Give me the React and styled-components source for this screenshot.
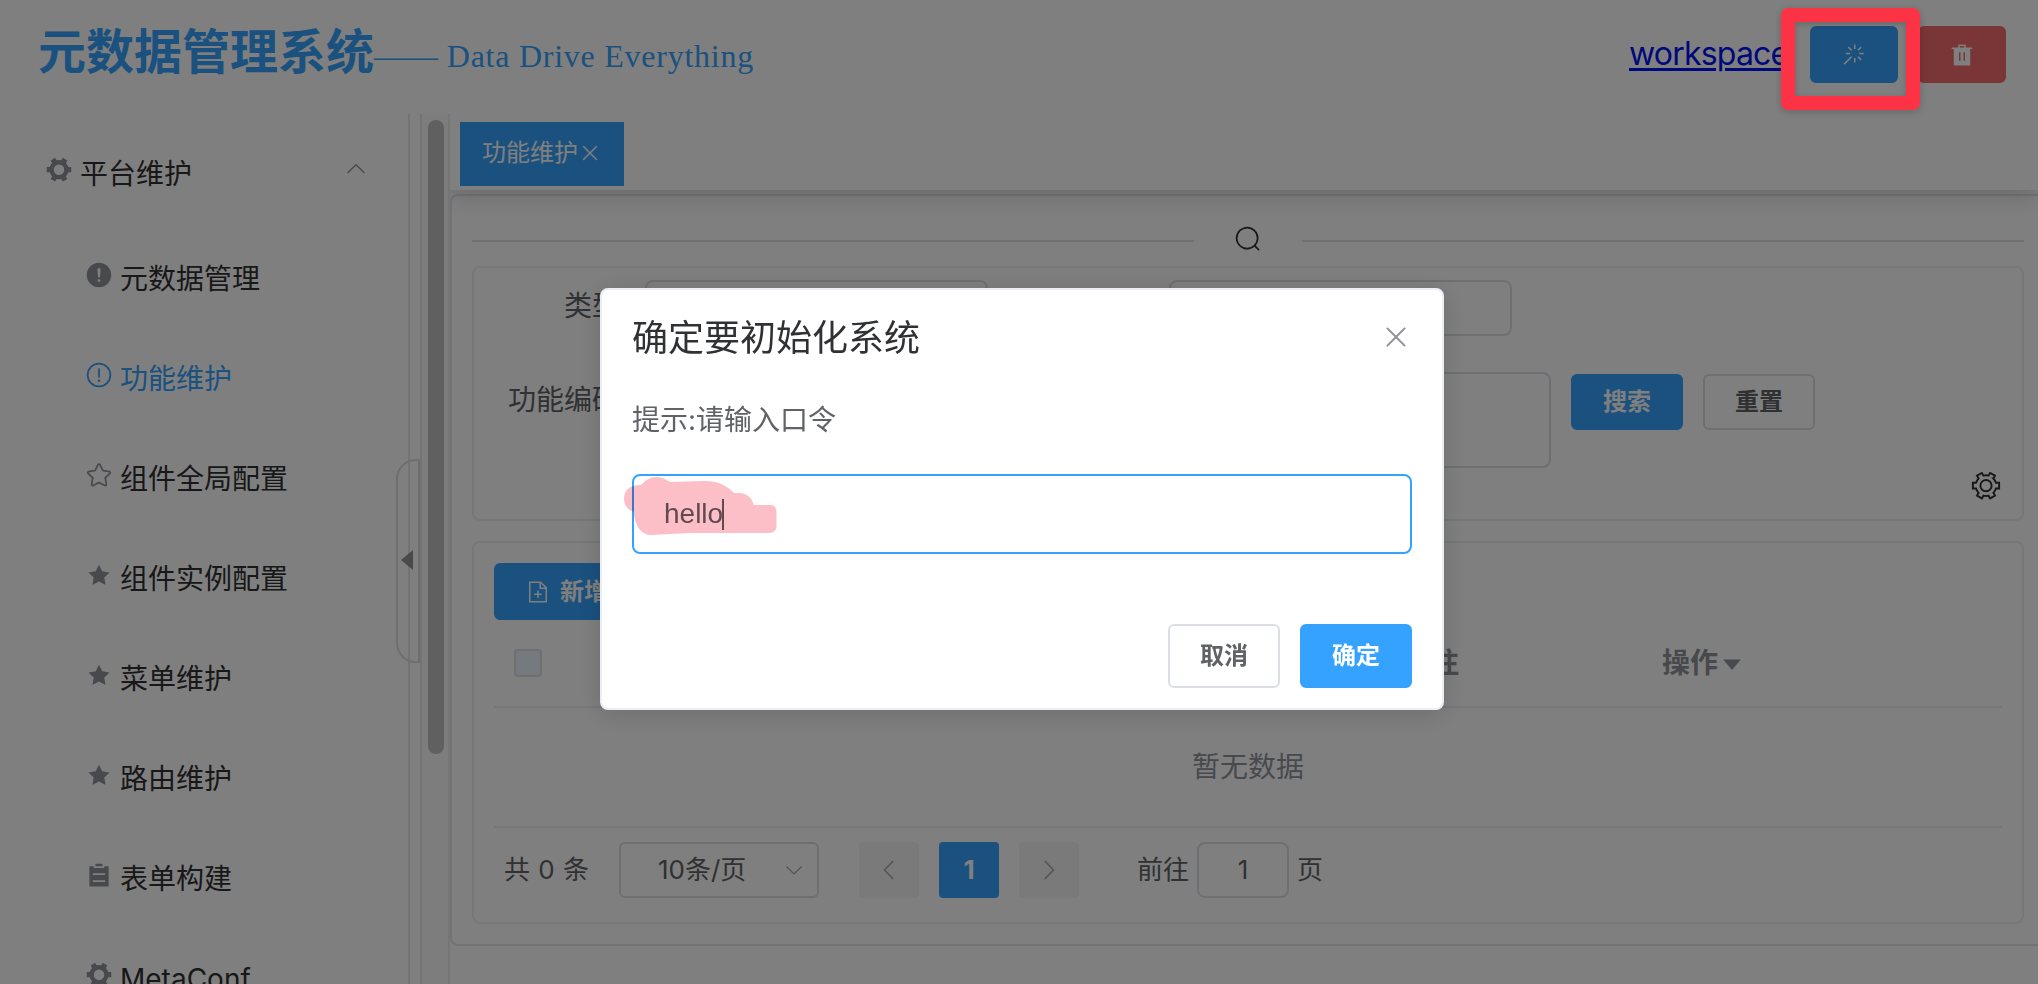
import React from "react";
import styled, { createGlobalStyle, css } from "styled-components";

const BLUE = "#36a2ff";

const GlobalStyle = createGlobalStyle`
  *, *::before, *::after { box-sizing: border-box; }
  html, body { margin: 0; padding: 0; overflow: hidden; background: #fff; }
  body {
    font-family: Inter, "Noto Sans CJK SC", "Liberation Sans", sans-serif;
    font-size: 28px;
    color: #303133;
  }
`;

const paths = {
  magic: "M512 64h64v192h-64V64zm0 576h64v192h-64V640zM160 480v-64h192v64H160zm576 0v-64h192v64H736zM249.856 199.04l45.248-45.184L430.848 289.6 385.6 334.848 249.856 199.104zM657.152 606.4l45.248-45.248 135.744 135.744-45.248 45.248L657.152 606.4zM114.048 923.2 68.8 877.952l316.8-316.8 45.248 45.248-316.8 316.8zM702.4 334.848 657.152 289.6l135.744-135.744 45.248 45.248L702.4 334.848z",
  trash: "M352 192V95.936a32 32 0 0 1 32-32h256a32 32 0 0 1 32 32V192h256a32 32 0 1 1 0 64H96a32 32 0 0 1 0-64h256zm64 0h192v-64H416v64zM192 960a32 32 0 0 1-32-32V256h704v672a32 32 0 0 1-32 32H192zm224-192a32 32 0 0 0 32-32V416a32 32 0 0 0-64 0v320a32 32 0 0 0 32 32zm192 0a32 32 0 0 0 32-32V416a32 32 0 0 0-64 0v320a32 32 0 0 0 32 32z",
  close: "M764.288 214.592 512 466.88 259.712 214.592a31.936 31.936 0 0 0-45.12 45.12L466.752 512 214.528 764.224a31.936 31.936 0 1 0 45.12 45.184L512 557.184l252.288 252.288a31.936 31.936 0 0 0 45.12-45.12L557.12 512.064l252.288-252.352a31.936 31.936 0 1 0-45.12-45.184z",
  warningFilled: "M512 64a448 448 0 1 1 0 896 448 448 0 0 1 0-896zm0 192a58.432 58.432 0 0 0-58.24 63.744l23.36 256.384a35.072 35.072 0 0 0 69.76 0l23.296-256.384A58.432 58.432 0 0 0 512 256zm0 512a51.2 51.2 0 1 0 0-102.4 51.2 51.2 0 0 0 0 102.4z",
  warning: "M512 64a448 448 0 1 1 0 896 448 448 0 0 1 0-896zm0 832a384 384 0 0 0 0-768 384 384 0 0 0 0 768zm48-176a48 48 0 1 1-96 0 48 48 0 0 1 96 0zm-48-464a32 32 0 0 1 32 32v288a32 32 0 0 1-64 0V288a32 32 0 0 1 32-32z",
  star: "m512 747.84 228.16 119.936a6.4 6.4 0 0 0 9.28-6.72l-43.52-254.08 184.512-179.904a6.4 6.4 0 0 0-3.52-10.88l-255.104-37.12L517.76 147.904a6.4 6.4 0 0 0-11.52 0L392.192 379.072l-255.104 37.12a6.4 6.4 0 0 0-3.52 10.88L318.08 606.976l-43.584 254.08a6.4 6.4 0 0 0 9.28 6.72L512 747.84zM313.6 924.48a70.4 70.4 0 0 1-102.144-74.24l37.888-220.928L88.96 472.96A70.4 70.4 0 0 1 128 352.896l221.76-32.256 99.2-200.96a70.4 70.4 0 0 1 126.208 0l99.2 200.96 221.824 32.256a70.4 70.4 0 0 1 39.04 120.064L774.72 629.376l37.888 220.928a70.4 70.4 0 0 1-102.144 74.24L512 820.096l-198.4 104.32z",
  starFilled: "M283.84 867.84 512 747.776l228.16 119.936a6.4 6.4 0 0 0 9.28-6.72l-43.52-254.08 184.512-179.904a6.4 6.4 0 0 0-3.52-10.88l-255.104-37.12L517.76 147.904a6.4 6.4 0 0 0-11.52 0L392.192 379.072l-255.104 37.12a6.4 6.4 0 0 0-3.52 10.88L318.08 606.976l-43.584 254.08a6.4 6.4 0 0 0 9.28 6.72z",
  search: "m795.904 750.72 124.992 124.928a32 32 0 0 1-45.248 45.248L750.656 795.904a416 416 0 1 1 45.248-45.248zM480 832a352 352 0 1 0 0-704 352 352 0 0 0 0 704z",
  tools: "M764.416 254.72a351.68 351.68 0 0 1 86.336 149.184H960v192.064H850.752a351.68 351.68 0 0 1-86.336 149.312l54.72 94.72-166.272 96-54.592-94.72a352.64 352.64 0 0 1-172.48 0L371.136 936l-166.272-96 54.72-94.72a351.68 351.68 0 0 1-86.336-149.312H64v-192h109.248a351.68 351.68 0 0 1 86.336-149.312L204.8 160l166.208-96h.192l54.656 94.592a352.64 352.64 0 0 1 172.48 0L652.8 64h.128L819.2 160l-54.72 94.72zM704 499.968a192 192 0 1 0-384 0 192 192 0 0 0 384 0z",
  docAdd: "M832 384H576V128H192v768h640V384zm-26.496-64L640 154.496V320h165.504zM160 64h480l256 256v608a32 32 0 0 1-32 32H160a32 32 0 0 1-32-32V96a32 32 0 0 1 32-32zm320 512V448h64v128h128v64H544v128h-64V640H352v-64h128z",
  list: "M704 192h160v736H160V192h160v64h384v-64zM288 512h448v-64H288v64zm0 256h448v-64H288v64zm96-576V96h256v96H384z",
  arrow: "M831.872 340.864 512 652.672 192.128 340.864a30.592 30.592 0 0 0-42.752 0 29.12 29.12 0 0 0 0 41.6L489.664 714.24a32 32 0 0 0 44.672 0l340.288-331.712a29.12 29.12 0 0 0 0-41.728 30.592 30.592 0 0 0-42.752 0z",
  caret: "m192 384 320 384 320-384z",
};

const Svg = styled.svg`
  display: block;
  flex: none;
  width: ${(p) => p.$size}px;
  height: ${(p) => p.$size}px;
  fill: ${(p) => p.$color || "currentColor"};
  transform: rotate(${(p) => p.$turn || 0}deg);
`;

const OutlinePath = styled.path`
  fill: none;
  stroke: currentColor;
  stroke-width: 66;
`;

const Icon = ({ name, size = 28, color, turn, outline }) => (
  <Svg viewBox="0 0 1024 1024" $size={size} $color={color} $turn={turn} aria-hidden="true">
    {outline ? <OutlinePath d={paths[name]} /> : <path d={paths[name]} />}
  </Svg>
);

const Page = styled.div`
  display: flex;
  flex-direction: column;
  width: 2038px;
  height: 984px;
  overflow: hidden;
  background: #fff;
`;

const Header = styled.header`
  display: flex;
  flex: none;
  height: 114px;
  padding-left: 38px;
  padding-right: 32px;
`;

const Brand = styled.h1`
  margin: 0;
  font-size: 48px;
  line-height: 103px;
  font-weight: 700;
  color: ${BLUE};
  white-space: nowrap;
`;

const Slogan = styled.span`
  flex: 1;
  padding-top: 8px;
  font-family: "Liberation Serif", serif;
  font-size: 32px;
  line-height: 96px;
  color: ${BLUE};
  white-space: pre;
`;

const SloganText = styled.span`
  letter-spacing: ${(p) => p.$spacing}px;
`;

const HeaderTools = styled.div`
  display: flex;
  align-items: flex-start;
  gap: 20px;
  padding-top: 26px;
`;

const WorkspaceLink = styled.a`
  width: 161px;
  color: #0012f6;
  font-size: 32px;
  letter-spacing: -0.8px;
  line-height: 56px;
  text-decoration: underline;
  text-decoration-thickness: 3px;
  text-underline-offset: 3px;
`;

const Button = styled.button`
  display: flex;
  align-items: center;
  justify-content: center;
  gap: 10px;
  flex: none;
  width: ${(p) => p.$width}px;
  height: ${(p) => p.$height || 56}px;
  padding: 0;
  border: 2px solid ${(p) => (p.$tone ? p.$tone : "#dcdfe6")};
  border-radius: 6px;
  background: ${(p) => p.$tone || "#fff"};
  color: ${(p) => (p.$tone ? "#fff" : "#606266")};
  font-family: inherit;
  font-size: 24px;
  font-weight: 700;
  line-height: 1;
`;

const Body = styled.div`
  display: flex;
  flex: 1;
  min-height: 0;
`;

const Aside = styled.aside`
  position: relative;
  flex: none;
  width: 422px;
  border-right: 2px solid #e6e6e6;
`;

const Menu = styled.nav`
  width: 410px;
  height: 100%;
  padding-top: 10px;
  overflow: hidden;
  border-right: 2px solid #e6e6e6;
`;

const MenuTitle = styled.div`
  display: flex;
  align-items: center;
  height: 105px;
  padding: 0 40px 6px 45px;
  gap: 7px;
  color: #303133;
`;

const MenuItem = styled.div`
  display: flex;
  align-items: center;
  height: 100px;
  padding-left: 85px;
  gap: 7px;
  color: ${(p) => (p.$active ? BLUE : "#303133")};
`;

const MenuIcon = styled.span`
  padding-bottom: ${(p) => p.$lift || 8}px;
  color: ${(p) => (p.$active ? BLUE : "#909399")};
`;

const MenuLabel = styled.span`
  flex: 1;
  line-height: 40px;
`;

const FoldHandle = styled.div`
  position: absolute;
  top: 345px;
  right: 0;
  display: flex;
  align-items: center;
  justify-content: center;
  width: 24px;
  height: 204px;
  border: 2px solid #dcdcdc;
  border-radius: 20px 0 0 20px;
`;

const FoldArrow = styled.span`
  width: 0;
  height: 0;
  margin-right: 3px;
  margin-bottom: 2px;
  border: 10px solid transparent;
  border-left-width: 0;
  border-right: 12px solid #949494;
`;

const ScrollTrack = styled.div`
  flex: none;
  width: 28px;
  padding: 6px 4px 0 6px;
  border-right: 2px solid #ededed;
  background: #fafafa;
`;

const ScrollThumb = styled.div`
  width: 16px;
  height: 634px;
  border-radius: 8px;
  background: #c1c1c1;
`;

const Main = styled.main`
  flex: 1;
  min-width: 0;
`;

const TabBar = styled.div`
  position: relative;
  height: 76px;
  padding: 8px 10px;
  background: #fff;
  box-shadow: 0 4px 24px rgba(0, 0, 0, 0.2);
  clip-path: inset(0 0 -40px 0);
`;

const Tab = styled.div`
  display: flex;
  align-items: center;
  width: 164px;
  height: 64px;
  padding: 0 0 2px 22px;
  background: ${BLUE};
  color: #fff;
  font-size: 24px;
  line-height: 40px;
`;

const OuterCard = styled.section`
  width: 1620px;
  height: 752px;
  margin-top: 4px;
  padding: 0 20px;
  border: 2px solid #e4e7ed;
  border-radius: 8px;
`;

const Divider = styled.div`
  display: flex;
  align-items: center;
  width: 1552px;
  height: 70px;
  padding-top: 20px;
  gap: 40px;
`;

const Rule = styled.i`
  flex: 1;
  height: 2px;
  background: #dcdfe6;
`;

const RuleIcon = styled.span`
  padding-bottom: 4px;
  color: #303133;
`;

const Panel = styled.div`
  width: 1552px;
  height: ${(p) => p.$height}px;
  margin-bottom: 20px;
  border: 2px solid #ebeef5;
  border-radius: 8px;
`;

const FormRow = styled.div`
  display: flex;
  align-items: flex-start;
  height: ${(p) => p.$height}px;
  padding-top: 12px;
`;

const Label = styled.label`
  width: ${(p) => p.$width}px;
  padding-right: 25px;
  color: #606266;
  line-height: ${(p) => p.$line || 52}px;
  text-align: right;
  white-space: nowrap;
`;

const Field = styled.div`
  width: ${(p) => p.$width}px;
  height: ${(p) => p.$height || 56}px;
  border: 2px solid #dcdfe6;
  border-radius: 8px;
`;

const FormActions = styled.div`
  display: flex;
  gap: 20px;
  padding: 2px 0 0 20px;
`;

const PanelCorner = styled.div`
  display: flex;
  justify-content: flex-end;
  padding: 3px 21px 0;
`;

const TableWrap = styled.div`
  padding: 20px 20px 0;
`;

const TableHead = styled.div`
  display: grid;
  grid-template-columns: 889px 259px 1fr;
  align-items: center;
  height: 88px;
  padding-left: 20px;
  border-bottom: 2px solid #ebeef5;
  color: #909399;
  font-weight: 700;
`;

const HeadCell = styled.div`
  display: flex;
  align-items: center;
  line-height: 40px;
  white-space: nowrap;
`;

const Checkbox = styled.span`
  display: block;
  width: 28px;
  height: 28px;
  border: 2px solid #dcdfe6;
  border-radius: 4px;
  background: #edf2fc;
`;

const EmptyRow = styled.div`
  height: 120px;
  border-bottom: 2px solid #ebeef5;
  color: #909399;
  line-height: 119px;
  text-align: center;
`;

const Pagination = styled.div`
  display: flex;
  align-items: center;
  padding: 14px 0 0 10px;
  color: #606266;
  font-size: 26px;
  line-height: 40px;
`;

const Total = styled.span`
  width: 115px;
  white-space: nowrap;
  word-spacing: 1px;
`;

const PageSize = styled.div`
  display: flex;
  align-items: center;
  justify-content: space-between;
  width: 200px;
  height: 56px;
  margin-right: 40px;
  padding: 0 12px 0 37px;
  border: 2px solid #dcdfe6;
  border-radius: 6px;
`;

const Pager = styled.span`
  display: flex;
  align-items: center;
  justify-content: center;
  width: 60px;
  height: 56px;
  margin-right: 20px;
  border-radius: 4px;
  background: #f4f4f5;
  color: #a8abb2;
  ${(p) =>
    p.$current &&
    css`
      background: ${BLUE};
      color: #fff;
      font-weight: 700;
    `}
`;

const JumpText = styled.span`
  margin-left: ${(p) => p.$left}px;
`;

const JumpInput = styled.div`
  width: 92px;
  height: 56px;
  margin-left: 8px;
  border: 2px solid #dcdfe6;
  border-radius: 8px;
  line-height: 52px;
  text-align: center;
`;

const Overlay = styled.div`
  position: fixed;
  inset: 0;
  display: flex;
  align-items: flex-start;
  padding: 288px 0 0 600px;
  background: rgba(0, 0, 0, 0.5);
`;

const Dialog = styled.div`
  position: relative;
  width: 844px;
  height: 422px;
  padding: 22px 30px 0;
  border: 2px solid #ebeef5;
  border-radius: 8px;
  background: #fff;
  box-shadow: 0 4px 24px rgba(0, 0, 0, 0.15);
`;

const DialogHead = styled.div`
  display: flex;
  align-items: center;
  justify-content: space-between;
  height: 52px;
  color: #303133;
  font-size: 36px;
  line-height: 52px;
`;

const CloseBox = styled.span`
  padding-bottom: 3px;
`;

const Prompt = styled.p`
  margin: 36px 0 0;
  color: #606266;
  line-height: 40px;
`;

const PromptInput = styled.div`
  display: flex;
  align-items: center;
  height: 80px;
  margin-top: 34px;
  padding-left: 30px;
  border: 2px solid ${BLUE};
  border-radius: 8px;
  color: #606266;
  font-family: "Liberation Sans", sans-serif;
`;

const Caret = styled.i`
  width: 2px;
  height: 31px;
  margin-left: -1px;
  background: #606266;
`;

const DialogFoot = styled.div`
  display: flex;
  justify-content: flex-end;
  gap: 20px;
  margin-top: 70px;
`;

const Highlight = styled.svg`
  position: absolute;
  left: 22px;
  top: 186px;
  width: 156px;
  height: 62px;
  mix-blend-mode: multiply;
`;

const RedFrame = styled.div`
  position: fixed;
  left: 1781px;
  top: 8px;
  width: 139px;
  height: 102px;
  border: 14px solid #fc3345;
  border-radius: 7px;
  box-shadow: 0 2px 8px rgba(0, 0, 0, 0.2), inset 0 2px 6px rgba(0, 0, 0, 0.2);
`;

const menu = [
  { icon: "warningFilled", label: "元数据管理" },
  { icon: "warning", label: "功能维护", active: true },
  { icon: "star", label: "组件全局配置" },
  { icon: "starFilled", label: "组件实例配置" },
  { icon: "starFilled", label: "菜单维护" },
  { icon: "starFilled", label: "路由维护" },
  { icon: "list", label: "表单构建" },
  { icon: "tools", label: "MetaConf" },
];

const SideMenu = () => (
  <Aside>
    <Menu>
      <MenuTitle>
        <MenuIcon><Icon name="tools" /></MenuIcon>
        <MenuLabel>平台维护</MenuLabel>
        <MenuIcon $lift={10}><Icon name="arrow" size={24} turn={180} /></MenuIcon>
      </MenuTitle>
      {menu.map((m) => (
        <MenuItem key={m.label} $active={m.active}>
          <MenuIcon $active={m.active}><Icon name={m.icon} /></MenuIcon>
          <MenuLabel>{m.label}</MenuLabel>
        </MenuItem>
      ))}
    </Menu>
    <FoldHandle><FoldArrow /></FoldHandle>
  </Aside>
);

const SearchPanel = () => (
  <Panel $height={255}>
    <FormRow $height={92}>
      <Label $width={171}>类型</Label>
      <Field $width={343} />
      <Label $width={181}>名称</Label>
      <Field $width={343} />
    </FormRow>
    <FormRow $height={108}>
      <Label $width={171} $line={56}>功能编码</Label>
      <Field $width={906} $height={96} />
      <FormActions>
        <Button $width={112} $tone={BLUE}>搜索</Button>
        <Button $width={112}>重置</Button>
      </FormActions>
    </FormRow>
    <PanelCorner><Icon name="tools" size={30} outline /></PanelCorner>
  </Panel>
);

const TablePanel = () => (
  <Panel $height={383}>
    <TableWrap>
      <Button $width={146} $height={57} $tone={BLUE}>
        <Icon name="docAdd" size={24} />新增
      </Button>
      <TableHead>
        <HeadCell><Checkbox /></HeadCell>
        <HeadCell>备注</HeadCell>
        <HeadCell>操作<Icon name="caret" size={28} /></HeadCell>
      </TableHead>
      <EmptyRow>暂无数据</EmptyRow>
      <Pagination>
        <Total>共 0 条</Total>
        <PageSize>10条/页<Icon name="arrow" size={22} color="#a8abb2" /></PageSize>
        <Pager><Icon name="arrow" size={26} turn={90} /></Pager>
        <Pager $current>1</Pager>
        <Pager><Icon name="arrow" size={26} turn={-90} /></Pager>
        <JumpText $left={38}>前往</JumpText>
        <JumpInput>1</JumpInput>
        <JumpText $left={8}>页</JumpText>
      </Pagination>
    </TableWrap>
  </Panel>
);

const ConfirmDialog = () => (
  <Overlay>
    <Dialog role="dialog">
      <DialogHead>
        确定要初始化系统
        <CloseBox><Icon name="close" size={32} color="#909399" /></CloseBox>
      </DialogHead>
      <Prompt>提示:请输入口令</Prompt>
      <PromptInput>hello<Caret /></PromptInput>
      <DialogFoot>
        <Button $width={112} $height={64}>取消</Button>
        <Button $width={112} $height={64} $tone={BLUE}>确定</Button>
      </DialogFoot>
      <Highlight viewBox="0 0 156 62">
        <path
          fill="#fdbfc7"
          d="M17 9C22 4 26 1 32 1C37 1 42 3 46 6L78 5C94 4.500 102 9 110 17H115C123 17 129 23 129.500 29H146Q152.500 29 152.500 36V50Q152.500 57 145 57H66L27 59C18 59 11 51 9.500 36C3 33 0 29 0 23C0 14 6 9 17 9Z"
        />
      </Highlight>
    </Dialog>
  </Overlay>
);

export default function App() {
  return (
    <>
      <GlobalStyle />
      <Page>
        <Header>
          <Brand>元数据管理系统</Brand>
          <Slogan>——<SloganText $spacing={0.75}> Data Drive Everything</SloganText></Slogan>
          <HeaderTools>
            <WorkspaceLink>workspace</WorkspaceLink>
            <Button $width={88} $height={57} $tone={BLUE}><Icon name="magic" size={24} /></Button>
            <Button $width={88} $height={57} $tone="#f56c6c"><Icon name="trash" size={24} /></Button>
          </HeaderTools>
        </Header>
        <Body>
          <SideMenu />
          <ScrollTrack><ScrollThumb /></ScrollTrack>
          <Main>
            <TabBar>
              <Tab>功能维护<Icon name="close" size={24} /></Tab>
            </TabBar>
            <OuterCard>
              <Divider>
                <Rule />
                <RuleIcon><Icon name="search" /></RuleIcon>
                <Rule />
              </Divider>
              <SearchPanel />
              <TablePanel />
            </OuterCard>
          </Main>
        </Body>
      </Page>
      <ConfirmDialog />
      <RedFrame />
    </>
  );
}
